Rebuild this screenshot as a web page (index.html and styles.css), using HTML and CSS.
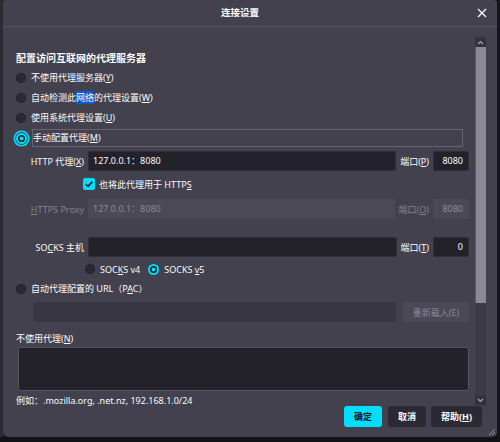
FILE: index.html
```html
<!DOCTYPE html>
<html lang="zh-CN">
<head>
<meta charset="utf-8">
<title>连接设置</title>
<link rel="stylesheet" href="styles.css">
</head>
<body>
<div class="page">
  <div class="behind"></div>
  <div class="dialog">
    <div class="titlebar">
      <span></span>
      <span class="title">连接设置</span>
      <span class="close">
        <svg width="10" height="10" viewBox="0 0 10 10"><path d="M1 1L9 9M9 1L1 9" stroke="#fbfbfe" stroke-width="1.3" fill="none"/></svg>
      </span>
    </div>
    <div class="body">
      <div class="main">
        <div class="heading">配置访问互联网的代理服务器</div>
        <div class="radio-row"><span class="radio"></span><span>不使用代理服务器(<u>Y</u>)</span></div>
        <div class="radio-row"><span class="radio"></span><span>自动检测此<span class="sel">网络</span>的代理设置(<u>W</u>)</span></div>
        <div class="radio-row"><span class="radio"></span><span>使用系统代理设置(<u>U</u>)</span></div>
        <div class="radio-row"><span class="radio checked focus"></span><span class="focus-label">手动配置代理(<u>M</u>)</span></div>

        <div class="field-row first">
          <span class="field-label">HTTP 代理(<u>X</u>)</span>
          <div class="input">127.0.0.1：8080</div>
          <span class="port-label">端口(<u>P</u>)</span>
          <div class="input port">8080</div>
        </div>
        <div class="check-row">
          <span class="checkbox"><svg width="10" height="10" viewBox="0 0 10 10"><path d="M1.8 5.2L4 7.4L8.4 2.6" stroke="#1c1b22" stroke-width="1.6" fill="none"/></svg></span>
          <span>也将此代理用于 HTTP<u>S</u></span>
        </div>
        <div class="field-row disabled https">
          <span class="field-label"><u>H</u>TTPS Proxy</span>
          <div class="input">127.0.0.1：8080</div>
          <span class="port-label">端口(<u>O</u>)</span>
          <div class="input port">8080</div>
        </div>
        <div class="field-row socks">
          <span class="field-label">SO<u>C</u>KS 主机</span>
          <div class="input"></div>
          <span class="port-label">端口(<u>T</u>)</span>
          <div class="input port">0</div>
        </div>
        <div class="version-row">
          <span class="radio"></span><span class="vlabel">SOC<u>K</u>S v4</span>
          <span class="radio checked"></span><span class="vlabel">SOCKS <u>v</u>5</span>
        </div>
        <div class="radio-row pac-radio"><span class="radio"></span><span>自动代理配置的 URL（P<u>A</u>C）</span></div>
        <div class="pac-row">
          <div class="input pac"></div>
          <span class="reload">重新载入(E)</span>
        </div>
        <div class="noproxy-label">不使用代理(<u>N</u>)</div>
        <div class="textarea"></div>
        <div class="example">例如：.mozilla.org, .net.nz, 192.168.1.0/24</div>
      </div>
      <div class="scrollbar">
        <div class="sb-btn"><svg width="7" height="5" viewBox="0 0 7 5"><path d="M1 4L3.5 1.5L6 4" stroke="#a9a8b2" stroke-width="1.1" fill="none"/></svg></div>
        <div class="sb-thumb"></div>
        <div class="sb-track"></div>
        <div class="sb-btn"><svg width="7" height="5" viewBox="0 0 7 5"><path d="M1 1L3.5 3.5L6 1" stroke="#a9a8b2" stroke-width="1.1" fill="none"/></svg></div>
      </div>
    </div>
    <div class="footer">
      <button class="btn primary">确定</button>
      <button class="btn">取消</button>
      <button class="btn help">帮助(<u>H</u>)</button>
    </div>
    <svg class="grip" width="8" height="8" viewBox="0 0 8 8"><path d="M7 1L1 7M7 4L4 7M7 6.5L6.5 7" stroke="#8f8e98" stroke-width="1" fill="none"/></svg>
  </div>
</div>
<div class="bottom-band"></div>
</body>
</html>
```

FILE: styles.css
```css
* { box-sizing: border-box; }

html, body {
  margin: 0;
  padding: 0;
}

body {
  width: 500px;
  height: 442px;
  overflow: hidden;
  background: #161519;
  font-family: "Noto Sans", "Noto Sans CJK SC", sans-serif;
  font-size: 9px;
  color: #fbfbfe;
}

u {
  text-decoration: underline;
  text-underline-offset: 1px;
  text-decoration-thickness: 1px;
}

.page {
  display: flex;
  height: 437px;
}

.behind {
  width: 3px;
  background: #2c2b31;
}

.dialog {
  position: relative;
  width: 494px;
  height: 437px;
  background: #42414d;
  border-radius: 2px 2px 5px 5px;
  display: flex;
  flex-direction: column;
}

.titlebar {
  flex: none;
  height: 27px;
  border-bottom: 1px solid #55545f;
  display: grid;
  grid-template-columns: 1fr auto 1fr;
  align-items: center;
}

.title {
  font-size: 9.5px;
  font-weight: 700;
  padding-right: 20px;
  line-height: 14px;
}

.close {
  justify-self: end;
  margin-right: 10px;
  display: flex;
}

.body {
  flex: none;
  height: 378px;
  display: flex;
}

.main {
  flex: 1;
  padding: 23px 0 0 13px;
  display: flex;
  flex-direction: column;
}

.main > * {
  flex: none;
}

.heading {
  height: 16px;
  line-height: 16px;
  font-size: 10px;
  font-weight: 700;
  margin-bottom: 2px;
}

.radio-row {
  height: 20px;
  display: flex;
  align-items: center;
  gap: 5px;
  line-height: 14px;
}

.radio {
  flex: none;
  width: 10px;
  height: 10px;
  border-radius: 50%;
  background: #2b2a33;
  box-shadow: inset 0 0 0 1px #26252d;
}

.radio.checked {
  width: 11px;
  height: 11px;
  background: #00ddff;
  box-shadow: inset 0 0 0 2px #00ddff, inset 0 0 0 3.5px #1c1b22;
}

.radio.focus {
  box-shadow: inset 0 0 0 2px #00ddff, inset 0 0 0 3.5px #1c1b22, 0 0 0 1px #42414d, 0 0 0 2.5px #00ddff;
}

.sel {
  background: #0a5bd0;
}

.focus-label {
  flex: 1;
  height: 18px;
  margin-right: 6px;
  border: 1px solid #65646f;
  display: flex;
  align-items: center;
}

.field-row {
  display: flex;
  align-items: center;
  height: 20px;
}

.field-row.first { margin-top: 3px; }
.field-row.https { margin-top: 5px; }
.field-row.socks { margin-top: 18px; }

.field-label {
  width: 68px;
  flex: none;
  text-align: right;
  margin-right: 4px;
}

.input {
  flex: 1;
  height: 20px;
  background: #23222b;
  border: 1px solid #2f2e38;
  border-radius: 2px;
  padding-left: 4px;
  line-height: 18px;
  font-size: 9px;
}

.port-label {
  margin: 0 4px;
}

.input.port {
  flex: none;
  width: 36px;
  text-align: right;
  padding: 0 5px 0 0;
}

.disabled {
  color: #83828c;
}

.disabled .input {
  background: #4a4955;
  border-color: #4a4955;
  color: #8a8994;
}

.check-row {
  height: 20px;
  margin-top: 3px;
  padding-left: 67px;
  display: flex;
  align-items: center;
  gap: 4px;
}

.checkbox {
  width: 12px;
  height: 12px;
  border-radius: 2px;
  background: #00ddff;
  display: flex;
  align-items: center;
  justify-content: center;
}

.version-row {
  height: 20px;
  margin-top: 2px;
  padding-left: 69px;
  display: flex;
  align-items: center;
}

.vlabel {
  margin-left: 5px;
  margin-right: 8px;
}

.pac-row {
  display: flex;
  align-items: center;
  margin-top: 3px;
  padding-left: 17px;
  height: 20px;
}

.input.pac {
  background: #383742;
  border-color: #383742;
}

.reload {
  margin-left: 7px;
  width: 66px;
  height: 20px;
  border-radius: 3px;
  background: #4a4955;
  color: #8a8994;
  display: flex;
  align-items: center;
  justify-content: center;
}

.noproxy-label {
  margin-top: 9px;
  height: 16px;
  line-height: 16px;
}

.textarea {
  height: 44px;
  margin-left: 2px;
  background: #23222b;
  border: 1px solid #55545f;
  border-radius: 3px;
}

.example {
  margin-top: 2px;
  height: 16px;
  line-height: 16px;
}

.scrollbar {
  flex: none;
  width: 11px;
  margin: 10px 11px 0 6px;
  display: flex;
  flex-direction: column;
  background: #3b3a45;
}

.sb-btn {
  flex: none;
  height: 10px;
  background: #33323c;
  display: flex;
  align-items: center;
  justify-content: center;
}

.sb-thumb {
  flex: none;
  height: 256px;
  background: #8b8a94;
  border-left: 1px solid #5c5b66;
}

.sb-track {
  flex: 1;
}

.footer {
  flex: 1;
  display: flex;
  justify-content: flex-end;
  align-items: flex-start;
  padding: 1px 15px 0 0;
  gap: 5px;
}

.btn {
  height: 21px;
  border: none;
  border-radius: 3px;
  background: #2b2a33;
  color: #fbfbfe;
  font-family: inherit;
  font-size: 9px;
  font-weight: 700;
  padding: 0;
  width: 38px;
}

.btn.primary {
  background: #00ddff;
  color: #15141a;
  margin-right: 1px;
}

.btn.help {
  width: 51px;
}

.grip {
  position: absolute;
  right: 1px;
  bottom: 1px;
}

.bottom-band {
  height: 5px;
  background: #121115;
}
```
